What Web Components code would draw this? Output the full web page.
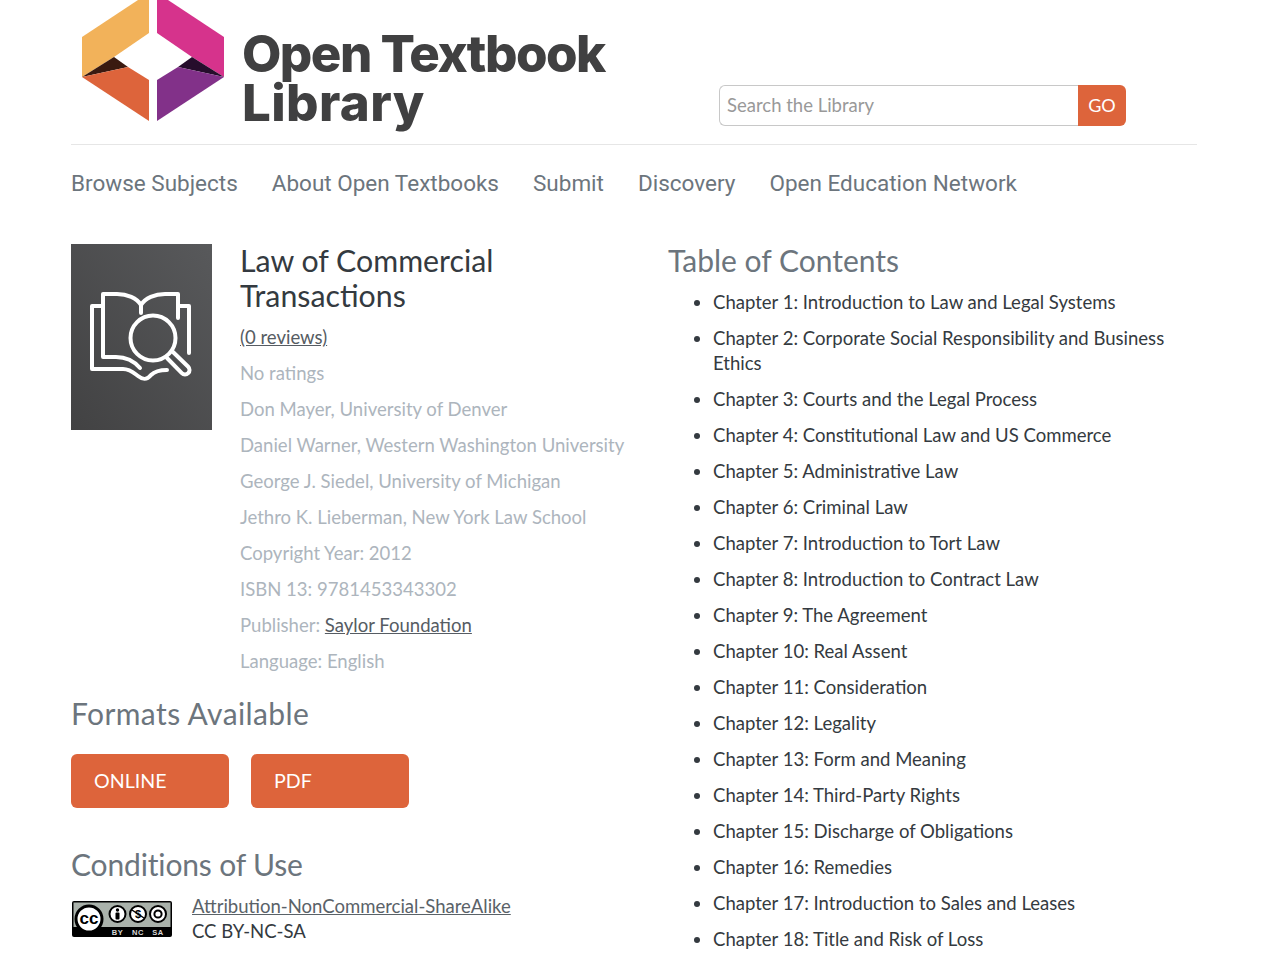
<!DOCTYPE html>
<html>
<head>
<meta charset="utf-8">
<title>Law of Commercial Transactions</title>
<style>
    html, body { margin: 0; height: 960px; overflow: hidden; background: #fff; }
    body { font-family: Lato, "Open Sans", sans-serif; color: #343a40; }
</style>
</head>
<body>
<otl-page>
    <otl-header></otl-header>
    <otl-nav></otl-nav>
    <otl-book></otl-book>
</otl-page>

<script>
class OtlPage extends HTMLElement {
    constructor() {
        super();
        this.attachShadow({ mode: 'open' });
        this.shadowRoot.innerHTML = `
            <style>
                :host { display: block; padding: 0 83px 0 71px; }
            </style>
            <slot></slot>
        `;
    }
}

class OtlHeader extends HTMLElement {
    constructor() {
        super();
        this.attachShadow({ mode: 'open' });
        this.shadowRoot.innerHTML = `
            <style>
                :host {
                    display: flex;
                    height: 144px;
                    border-bottom: 1px solid #e6e6e6;
                }
                .logo { display: flex; width: 648px; padding-left: 11px; box-sizing: border-box; }
                .logo svg { width: 142px; height: 121px; flex: none; }
                .wordmark {
                    margin: 29px 0 0 18px;
                    font: 800 51px/49px Inter, sans-serif;
                    color: #404041;
                    white-space: nowrap;
                }
                .wordmark span { display: block; letter-spacing: -1.55px; }
                .wordmark span + span { letter-spacing: 0.4px; }
                .search { display: flex; height: 41px; width: 407px; margin-top: 85px; }
                .field {
                    flex: 1;
                    border: 1px solid #c8c8c8;
                    border-right: 0;
                    border-radius: 6px 0 0 6px;
                    padding-left: 7px;
                    font-size: 18.5px;
                    line-height: 39px;
                    color: #999;
                }
                .go {
                    width: 48px;
                    background: #dd643b;
                    color: #fff;
                    border-radius: 0 6px 6px 0;
                    font-size: 18px;
                    line-height: 40px;
                    text-align: center;
                }
            </style>
            <div class="logo">
                <svg viewBox="82 0 142 121">
                    <polygon fill="#f2b25a" points="82,37 138,0 149,0 149,33 114,57 82,77"/>
                    <polygon fill="#3a1a10" points="82,77 114,57 128,67"/>
                    <polygon fill="#dd643b" points="82,77 128,67 149,80 149,121"/>
                    <polygon fill="#d6338c" points="157,0 168,0 224,37 224,77 192,57 157,33"/>
                    <polygon fill="#260d2c" points="224,77 192,57 178,67"/>
                    <polygon fill="#823189" points="224,77 178,67 157,80 157,121"/>
                </svg>
                <div class="wordmark"><span>Open Textbook</span><span>Library</span></div>
            </div>
            <div class="search">
                <div class="field">Search the Library</div>
                <div class="go">GO</div>
            </div>
        `;
    }
}

class OtlNav extends HTMLElement {
    constructor() {
        super();
        this.attachShadow({ mode: 'open' });
        const items = ['Browse Subjects', 'About Open Textbooks', 'Submit', 'Discovery', 'Open Education Network'];
        this.shadowRoot.innerHTML = `
            <style>
                :host {
                    display: flex;
                    gap: 34px;
                    height: 99px;
                    padding-top: 24px;
                    box-sizing: border-box;
                    font: 22.5px/28px Roboto, sans-serif;
                    color: #6c757d;
                }
            </style>
            ${items.map((item) => `<span>${item}</span>`).join('')}
        `;
    }
}

class OtlBook extends HTMLElement {
    constructor() {
        super();
        this.attachShadow({ mode: 'open' });
        const chapters = [
            'Chapter 1: Introduction to Law and Legal Systems',
            'Chapter 2: Corporate Social Responsibility and Business Ethics',
            'Chapter 3: Courts and the Legal Process',
            'Chapter 4: Constitutional Law and US Commerce',
            'Chapter 5: Administrative Law',
            'Chapter 6: Criminal Law',
            'Chapter 7: Introduction to Tort Law',
            'Chapter 8: Introduction to Contract Law',
            'Chapter 9: The Agreement',
            'Chapter 10: Real Assent',
            'Chapter 11: Consideration',
            'Chapter 12: Legality',
            'Chapter 13: Form and Meaning',
            'Chapter 14: Third-Party Rights',
            'Chapter 15: Discharge of Obligations',
            'Chapter 16: Remedies',
            'Chapter 17: Introduction to Sales and Leases',
            'Chapter 18: Title and Risk of Loss'
        ];
        const meta = [
            'Don Mayer, University of Denver',
            'Daniel Warner, Western Washington University',
            'George J. Siedel, University of Michigan',
            'Jethro K. Lieberman, New York Law School',
            'Copyright Year: 2012',
            'ISBN 13: 9781453343302'
        ];
        this.shadowRoot.innerHTML = `
            <style>
                :host {
                    display: grid;
                    grid-template-columns: 597px 1fr;
                    font-size: 18.55px;
                    line-height: 24px;
                }
                .summary { display: flex; gap: 28px; }
                .cover { width: 141px; height: 186px; flex: none; display: block; }
                .title { margin: -1px 0 12px; font-size: 30.3px; font-weight: 400; line-height: 35px; color: #343a40; }
                .info { margin: 0 0 12px; color: #adb5bd; }
                a { color: #5a6268; text-decoration: underline; }
                .info a { color: #565c63; }
                h2 { margin: -1px 0 0; font-size: 30px; font-weight: 400; line-height: 35px; color: #6c757d; }
                .formats { margin-top: 12px; }
                .formats h2 { letter-spacing: 0.4px; }
                .buttons { display: flex; gap: 22px; margin-top: 23px; }
                .btn {
                    width: 158px;
                    height: 54px;
                    padding-left: 23px;
                    box-sizing: border-box;
                    background: #dd643b;
                    border-radius: 6px;
                    color: #fff;
                    font-size: 19.6px;
                    line-height: 54px;
                }
                .conditions { margin-top: 40px; }
                .conditions h2 { letter-spacing: -0.15px; }
                .license { display: flex; gap: 19px; margin-top: 12px; align-items: center; }
                .license svg { width: 102px; height: 38px; flex: none; }
                .license-text { line-height: 25px; color: #343a40; }
                ul { margin: 12px 0 0; padding: 0 0 0 45px; }
                li { margin-bottom: 11.5px; line-height: 24.5px; padding-right: 20px; }
            </style>
            <div class="left">
                <div class="summary">
                    <svg class="cover" viewBox="0 0 141 186">
                        <defs>
                            <linearGradient id="cover-bg" x1="0" y1="1" x2="1" y2="0">
                                <stop offset="0" stop-color="#424243"/>
                                <stop offset="1" stop-color="#58595b"/>
                            </linearGradient>
                        </defs>
                        <rect width="141" height="186" fill="url(#cover-bg)"/>
                        <g fill="none" stroke="#fff" stroke-width="4" stroke-linecap="round" stroke-linejoin="round">
                            <path d="M70 69 V 61 C 66 54, 56 50, 46 50 H 32 V 113 H 45 C 54 113, 63 117, 69 124"/>
                            <path d="M70 61 C 74 54, 84 50, 94 50 H 107 V 74"/>
                            <path d="M32 62 H 21 V 125 H 52 C 59 125, 63 129, 67 132 C 72 136, 76 136, 80 131 C 84 127, 88 126, 96 126"/>
                            <path d="M108 62 H 118 V 109"/>
                            <circle cx="82" cy="94" r="22.5"/>
                            <path d="M102 108 L 117.2 122.8 A 4.5 4.5 0 0 1 110.8 129.2 L 96 114"/>
                        </g>
                    </svg>
                    <div>
                        <h1 class="title">Law of Commercial<br>Transactions</h1>
                        <p class="info"><a href="#">(0 reviews)</a></p>
                        <p class="info">No ratings</p>
                        ${meta.map((line) => `<p class="info">${line}</p>`).join('')}
                        <p class="info">Publisher: <a href="#">Saylor Foundation</a></p>
                        <p class="info">Language: English</p>
                    </div>
                </div>
                <div class="formats">
                    <h2>Formats Available</h2>
                    <div class="buttons">
                        <div class="btn">ONLINE</div>
                        <div class="btn">PDF</div>
                    </div>
                </div>
                <div class="conditions">
                    <h2>Conditions of Use</h2>
                    <div class="license">
                        <svg viewBox="0 0 102 38">
                            <rect x="1" y="1" width="100" height="36" rx="2" fill="#000"/>
                            <rect x="2.5" y="2.5" width="97" height="24.5" fill="#aab2ab"/>
                            <circle cx="18" cy="19" r="13" fill="#fff" stroke="#000" stroke-width="3"/>
                            <text x="18" y="24" font-family="Liberation Sans" font-size="17" font-weight="700" text-anchor="middle" fill="#000">cc</text>
                            <g fill="#fff" stroke="#000" stroke-width="2">
                                <circle cx="46.5" cy="14" r="8"/>
                                <circle cx="67" cy="14" r="8"/>
                                <circle cx="87" cy="14" r="8"/>
                            </g>
                            <circle cx="46.5" cy="10" r="1.7" fill="#000"/>
                            <rect x="44.5" y="12.5" width="4" height="7" rx="1" fill="#000"/>
                            <text x="67" y="18" font-family="Liberation Sans" font-size="11" font-weight="700" text-anchor="middle" fill="#000">$</text>
                            <path d="M61 10 L73 18" stroke="#000" stroke-width="1.5"/>
                            <circle cx="87" cy="14" r="3.6" fill="none" stroke="#000" stroke-width="2"/>
                            <g font-family="Liberation Sans" font-size="7.5" font-weight="700" fill="#d8d8d8" text-anchor="middle" letter-spacing="0.6">
                                <text x="46.5" y="35">BY</text>
                                <text x="67" y="35">NC</text>
                                <text x="87" y="35">SA</text>
                            </g>
                        </svg>
                        <div class="license-text">
                            <a href="#">Attribution-NonCommercial-ShareAlike</a><br>
                            CC BY-NC-SA
                        </div>
                    </div>
                </div>
            </div>
            <div class="right">
                <h2>Table of Contents</h2>
                <ul>${chapters.map((chapter) => `<li>${chapter}</li>`).join('')}</ul>
            </div>
        `;
    }
}

customElements.define('otl-page', OtlPage);
customElements.define('otl-header', OtlHeader);
customElements.define('otl-nav', OtlNav);
customElements.define('otl-book', OtlBook);
</script>
</body>
</html>
